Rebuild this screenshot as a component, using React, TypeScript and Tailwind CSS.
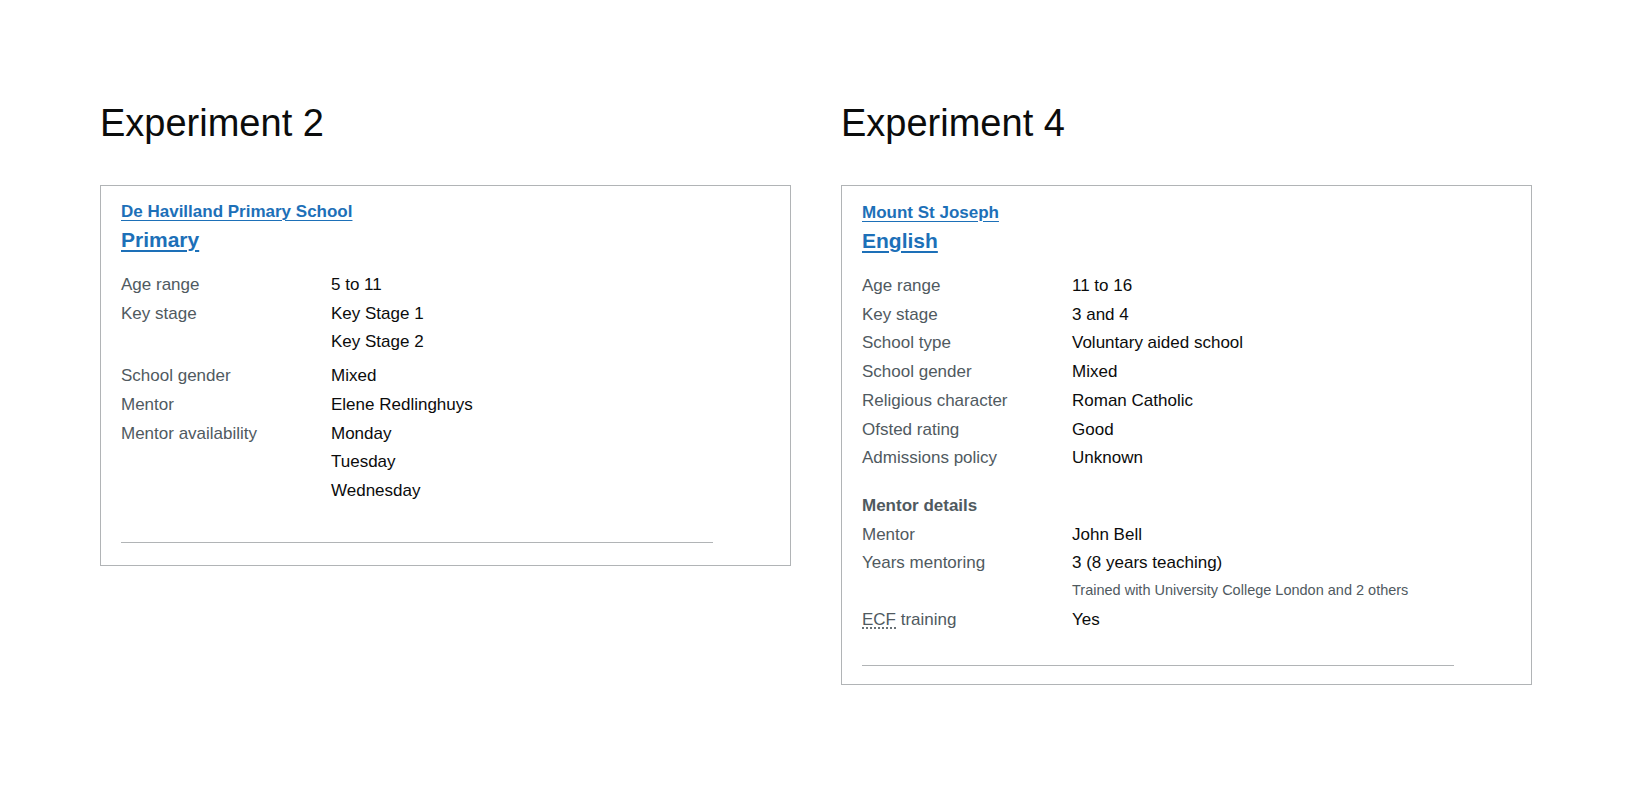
import type { ReactNode } from 'react';

interface RowProps {
  label: ReactNode;
  children: ReactNode;
}

function Row({ label, children }: RowProps) {
  return (
    <div className="flex">
      <dt className="w-[210px] shrink-0 text-[#505a5f]">{label}</dt>
      <dd className="text-[#0b0c0c]">{children}</dd>
    </div>
  );
}

interface CardProps {
  school: string;
  subject: string;
  topPad: string;
  bottomPad: string;
  children: ReactNode;
}

function Card({ school, subject, topPad, bottomPad, children }: CardProps) {
  return (
    <div className={`border border-[#b1b4b6] px-[20px] ${topPad} ${bottomPad}`}>
      <p className="text-[17px] font-bold leading-[20px]">
        <a href="#" className="text-[#1d70b8] underline decoration-1 underline-offset-[3px]">
          {school}
        </a>
      </p>
      <p className="mt-[5px] text-[21px] font-bold leading-[25px]">
        <a href="#" className="text-[#1d70b8] underline decoration-[1.5px] underline-offset-[3px]">
          {subject}
        </a>
      </p>
      <dl className="mt-[19px] text-[17px] leading-[28.7px]">{children}</dl>
      <hr className="mt-[31px] w-[592px] border-0 border-t border-[#b1b4b6]" />
    </div>
  );
}

export default function App() {
  return (
    <div
      className="min-h-screen bg-white px-[100px] pt-[101px] text-[#0b0c0c]"
      style={{ fontFamily: '"Liberation Sans", Arial, sans-serif' }}
    >
      <div className="grid grid-cols-2 items-start gap-x-[50px]">
        <section>
          <h2 className="mb-[39px] text-[38px] font-normal leading-[45px]">Experiment 2</h2>
          <Card school="De Havilland Primary School" subject="Primary" topPad="pt-[16px]" bottomPad="pb-[22px]">
            <Row label="Age range">5 to 11</Row>
            <Row label="Key stage">
              <div className="mb-[5px]">
                <p>Key Stage 1</p>
                <p>Key Stage 2</p>
              </div>
            </Row>
            <Row label="School gender">Mixed</Row>
            <Row label="Mentor">Elene Redlinghuys</Row>
            <Row label="Mentor availability">
              <div className="mb-[5px]">
                <p>Monday</p>
                <p>Tuesday</p>
                <p>Wednesday</p>
              </div>
            </Row>
          </Card>
        </section>

        <section>
          <h2 className="mb-[39px] text-[38px] font-normal leading-[45px]">Experiment 4</h2>
          <Card school="Mount St Joseph" subject="English" topPad="pt-[17px]" bottomPad="pb-[18px]">
            <Row label="Age range">11 to 16</Row>
            <Row label="Key stage">3 and 4</Row>
            <Row label="School type">Voluntary aided school</Row>
            <Row label="School gender">Mixed</Row>
            <Row label="Religious character">Roman Catholic</Row>
            <Row label="Ofsted rating">Good</Row>
            <Row label="Admissions policy">Unknown</Row>

            <p className="mt-[19px] font-bold text-[#505a5f]">Mentor details</p>
            <Row label="Mentor">John Bell</Row>
            <Row label="Years mentoring">
              <p>3 (8 years teaching)</p>
              <p className="mb-[6px] mt-[1.5px] text-[14.5px] leading-[20px] text-[#505a5f]">
                Trained with University College London and 2 others
              </p>
            </Row>
            <Row
              label={
                <>
                  <abbr
                    title="Early career framework"
                    className="no-underline"
                    style={{ textDecoration: 'underline dotted', textUnderlineOffset: '3px' }}
                  >
                    ECF
                  </abbr>{' '}
                  training
                </>
              }
            >
              Yes
            </Row>
          </Card>
        </section>
      </div>
    </div>
  );
}
